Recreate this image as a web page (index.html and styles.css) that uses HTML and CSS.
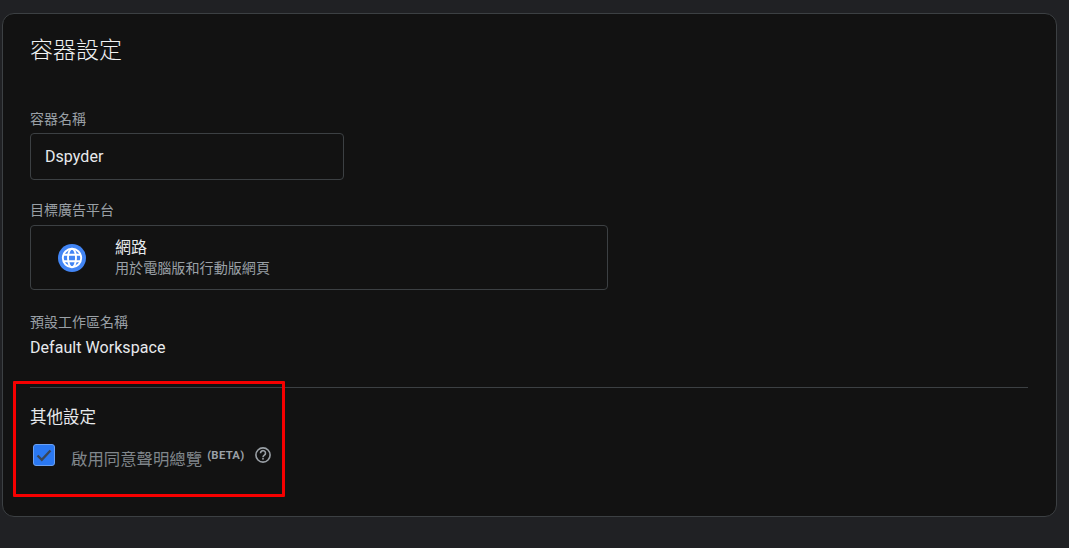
FILE: index.html
```html
<!DOCTYPE html>
<html lang="zh-Hant">
  <head>
    <meta charset="UTF-8" />
    <meta name="viewport" content="width=device-width, initial-scale=1.0" />
    <title>容器設定</title>
    <link rel="stylesheet" href="styles.css">
  </head>
  <body>
    <div class="card">
      <h1>容器設定</h1>

      <div class="field-label name-label">容器名稱</div>
      <div class="text-input">Dspyder</div>

      <div class="field-label platform-label">目標廣告平台</div>
      <div class="platform">
        <svg class="globe" width="28" height="28" viewBox="0 0 28 28">
          <circle cx="14" cy="14" r="14" fill="#4285f4" />
          <g fill="none" stroke="#fff" stroke-width="1.9">
            <circle cx="14" cy="14" r="9.2" />
            <ellipse cx="14" cy="14" rx="4" ry="9.2" />
            <path d="M5.4 10.8h17.2M5.4 17.2h17.2" />
          </g>
        </svg>
        <div class="platform-text">
          <div class="platform-name">網路</div>
          <div class="platform-desc">用於電腦版和行動版網頁</div>
        </div>
      </div>

      <div class="field-label workspace-label">預設工作區名稱</div>
      <div class="workspace">Default Workspace</div>

      <div class="divider"></div>

      <h2>其他設定</h2>
      <div class="option">
        <div class="checkbox">
          <svg width="16" height="14" viewBox="0 0 16 14">
            <path d="M1.5 7.5l4.3 4.3 8.7-9.3" fill="none" stroke="#3a4658" stroke-width="2.4" />
          </svg>
        </div>
        <span class="option-label">啟用同意聲明總覽</span>
        <span class="beta">(BETA)</span>
        <svg class="help" width="18" height="18" viewBox="0 0 18 18">
          <circle cx="9" cy="9" r="7.1" fill="none" stroke="#9aa0a6" stroke-width="1.6" />
          <path d="M6.5 7.2a2.5 2.5 0 1 1 3.9 2c-.9.6-1.4 1-1.4 2" fill="none" stroke="#9aa0a6" stroke-width="1.6" />
          <rect x="8.2" y="12" width="1.6" height="1.6" fill="#9aa0a6" />
        </svg>
      </div>

      <div class="highlight"></div>
    </div>
  </body>
</html>
```

FILE: styles.css
```css
body {
  font-family: "Roboto", "Noto Sans CJK TC", sans-serif;
  background-color: #202124;
  margin: 0;
  height: 548px;
  overflow: hidden;
}
.card {
  position: relative;
  box-sizing: border-box;
  width: 1055px;
  height: 504px;
  margin: 13px 0 0 2px;
  padding: 0 28px 0 27px;
  background: #121212;
  border: 1px solid #3c4043;
  border-radius: 12px;
}
h1 {
  margin: 20px 0 0;
  font-size: 23px;
  line-height: 34px;
  font-weight: 300;
  color: #f1f3f4;
}
.field-label {
  font-size: 14px;
  line-height: 20px;
  color: #9aa0a6;
}
.name-label {
  margin-top: 41px;
}
.text-input {
  box-sizing: border-box;
  width: 314px;
  height: 47px;
  margin-top: 4px;
  padding-left: 14px;
  border: 1px solid #3c4043;
  border-radius: 4px;
  font-size: 16px;
  letter-spacing: 0.05px;
  line-height: 45px;
  color: #e8eaed;
}
.platform-label {
  margin-top: 20px;
}
.platform {
  box-sizing: border-box;
  display: flex;
  align-items: center;
  width: 578px;
  height: 65px;
  margin-top: 5px;
  border: 1px solid #3c4043;
  border-radius: 4px;
}
.globe {
  margin-left: 27px;
}
.platform-text {
  margin-left: 29px;
  padding-bottom: 1px;
}
.platform-name {
  font-size: 16px;
  line-height: 22px;
  color: #e8eaed;
}
.platform-desc {
  font-size: 14.1px;
  line-height: 18px;
  color: #9aa0a6;
}
.workspace-label {
  margin-top: 22px;
}
.workspace {
  margin-top: 6px;
  font-size: 16px;
  letter-spacing: 0.05px;
  line-height: 20px;
  color: #e8eaed;
}
.divider {
  height: 1px;
  margin-top: 29px;
  background: #3c4043;
}
h2 {
  margin: 18px 0 0;
  font-size: 16.5px;
  line-height: 24px;
  font-weight: 400;
  color: #e8eaed;
}
.option {
  display: flex;
  align-items: flex-start;
  margin: 14px 0 0 3px;
}
.checkbox {
  box-sizing: border-box;
  display: flex;
  align-items: center;
  justify-content: center;
  width: 22px;
  height: 22px;
  background: #2a78f2;
  border: 1px solid #6aa0f2;
  border-radius: 3px;
}
.option-label {
  margin: 4px 0 0 16px;
  font-size: 16.4px;
  line-height: 24px;
  color: #80868b;
}
.beta {
  margin: 5px 0 0 5px;
  font-size: 11.3px;
  line-height: 13px;
  font-weight: 700;
  letter-spacing: 0.3px;
  color: #9aa0a6;
}
.help {
  margin: 2px 0 0 9px;
}
.highlight {
  position: absolute;
  left: 10px;
  top: 367px;
  width: 266px;
  height: 110px;
  border: 3px solid #f50000;
  border-radius: 1px;
}
```
